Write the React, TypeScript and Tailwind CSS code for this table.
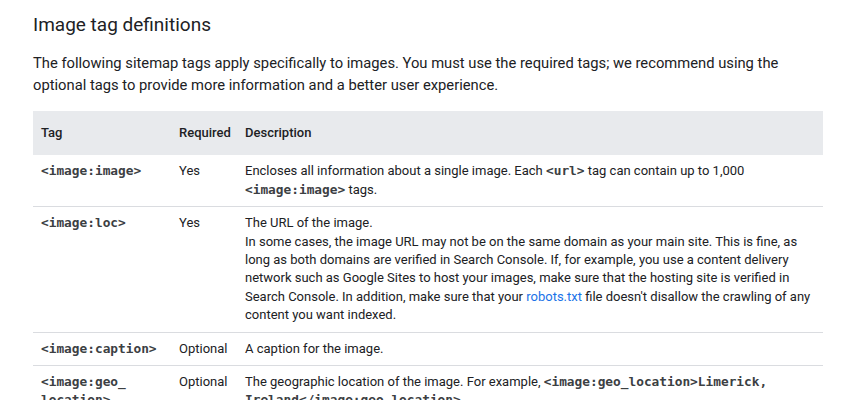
import React from "react";

const mono = "font-['DejaVu_Sans_Mono',monospace] text-[12.8px] font-bold text-[#3c4043]";

function Code({ children }: { children: React.ReactNode }) {
  return <code className={mono}>{children}</code>;
}

export default function App() {
  return (
    <div className="w-[856px] h-[400px] overflow-hidden bg-white font-['Roboto',sans-serif] text-[#202124] px-[33px]">
      <h2 className="pt-[11px] text-[19px] leading-[28px] font-normal">Image tag definitions</h2>
      <p className="mt-[13px] text-[14.75px] leading-[22px]">
        The following sitemap tags apply specifically to images. You must use the required tags; we recommend using the
        optional tags to provide more information and a better user experience.
      </p>
      <table className="mt-[15px] w-full table-fixed border-collapse text-[13px] leading-[18.4px]">
        <colgroup>
          <col className="w-[138px]" />
          <col className="w-[66px]" />
          <col />
        </colgroup>
        <thead>
          <tr className="bg-[#e8eaed] text-left">
            <th className="px-2 py-[13px] font-medium">Tag</th>
            <th className="pl-2 pr-0 py-[13px] font-medium whitespace-nowrap">Required</th>
            <th className="px-2 py-[13px] font-medium">Description</th>
          </tr>
        </thead>
        <tbody className="align-top">
          <tr className="border-b border-[#dadce0]">
            <td className="px-2 py-[7px]"><Code>&lt;image:image&gt;</Code></td>
            <td className="px-2 py-[7px]">Yes</td>
            <td className="px-2 py-[7px]">
              Encloses all information about a single image. Each <Code>&lt;url&gt;</Code> tag can contain up to 1,000{" "}
              <Code>&lt;image:image&gt;</Code> tags.
            </td>
          </tr>
          <tr className="border-b border-[#dadce0]">
            <td className="px-2 py-[7px]"><Code>&lt;image:loc&gt;</Code></td>
            <td className="px-2 py-[7px]">Yes</td>
            <td className="px-2 py-[7px]">
              The URL of the image.
              <br />
              In some cases, the image URL may not be on the same domain as your main site. This is fine, as long as both
              domains are verified in Search Console. If, for example, you use a content delivery network such as Google
              Sites to host your images, make sure that the hosting site is verified in Search Console. In addition, make
              sure that your <a className="text-[#1a73e8]" href="#">robots.txt</a> file doesn't disallow the crawling of any
              content you want indexed.
            </td>
          </tr>
          <tr className="border-b border-[#dadce0]">
            <td className="px-2 py-[7px]"><Code>&lt;image:caption&gt;</Code></td>
            <td className="px-2 py-[7px]">Optional</td>
            <td className="px-2 py-[7px]">A caption for the image.</td>
          </tr>
          <tr className="border-b border-[#dadce0]">
            <td className="px-2 py-[7px]"><Code>&lt;image:geo_<wbr />location&gt;</Code></td>
            <td className="px-2 py-[7px]">Optional</td>
            <td className="px-2 py-[7px]">
              The geographic location of the image. For example,{" "}
              <Code>&lt;image:geo_location&gt;Limerick, Ireland&lt;/image:geo_location&gt;</Code>.
            </td>
          </tr>
        </tbody>
      </table>
    </div>
  );
}
